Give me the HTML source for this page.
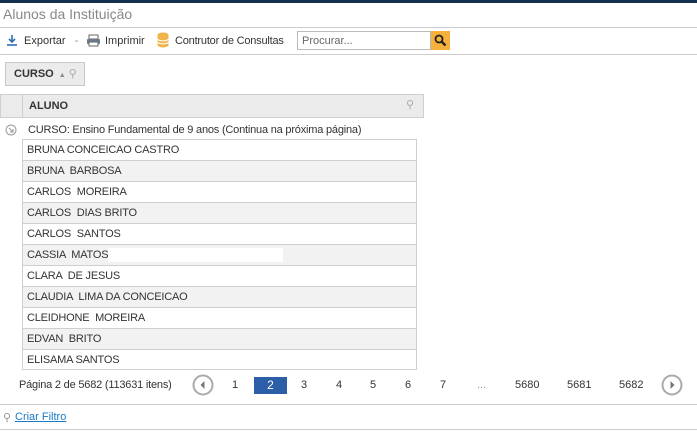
<html><head><style>
body{margin:0;width:697px;height:434px;background:#fff;font-family:"Liberation Sans",sans-serif;font-size:11px;color:#333;position:relative;overflow:hidden}
.a{position:absolute}
.row{position:absolute;left:22px;width:395px;height:21px;border:1px solid #cfcfcf;border-top:0;line-height:20px;padding-left:4px;box-sizing:border-box;letter-spacing:-0.2px}
.g{background:#f2f2f2}
.pg{position:absolute;top:379px;font-size:11px;color:#333}
</style></head><body>
<div class="a" style="left:0;top:0;width:697px;height:3px;background:#13304f"></div>
<div class="a" style="left:3px;top:6px;font-size:14px;color:#888">Alunos da Instituição</div>
<div class="a" style="left:0;top:27px;width:697px;height:1px;background:#ccc"></div>
<svg class="a" style="left:6px;top:34px" width="12" height="12"><path d="M6 1v7M3 5l3 3 3-3" stroke="#2d6db5" stroke-width="1.6" fill="none"/><path d="M1 11h10" stroke="#2d6db5" stroke-width="1.6"/></svg>
<div class="a" style="left:24px;top:35px">Exportar &nbsp; <span style="color:#888">-</span></div>
<svg class="a" style="left:86px;top:34px" width="15" height="13"><rect x="3" y="1" width="9" height="4" fill="#fff" stroke="#666"/><rect x="1" y="5" width="13" height="5" rx="1" fill="#6a7a8c"/><rect x="3" y="8" width="9" height="4" fill="#fff" stroke="#666"/></svg>
<div class="a" style="left:105px;top:35px">Imprimir</div>
<svg class="a" style="left:157px;top:32px" width="12" height="16"><ellipse cx="6" cy="3" rx="5.5" ry="2.5" fill="#f0b44a"/><rect x=".5" y="3" width="11" height="10" fill="#f0b44a"/><ellipse cx="6" cy="13" rx="5.5" ry="2.5" fill="#f0b44a"/><path d="M.5 7.5q5.5 3 11 0M.5 10.5q5.5 3 11 0" stroke="#fff" fill="none"/></svg>
<div class="a" style="left:175px;top:35px;letter-spacing:-0.2px">Contrutor de Consultas</div>
<div class="a" style="left:297px;top:31px;width:134px;height:19px;border:1px solid #bbb;box-sizing:border-box;padding:3px 4px;color:#666">Procurar...</div>
<div class="a" style="left:431px;top:31px;width:19px;height:19px;background:#f6b13d"></div>
<svg class="a" style="left:433px;top:33px" width="15" height="15"><circle cx="6" cy="6" r="3.5" stroke="#222" stroke-width="1.8" fill="none"/><path d="M8.5 8.5l4 4" stroke="#222" stroke-width="2.4"/></svg>
<div class="a" style="left:0;top:54px;width:697px;height:1px;background:#ccc"></div>
<div class="a" style="left:5px;top:62px;width:80px;height:24px;background:#ebebeb;border:1px solid #c8c8c8;box-sizing:border-box;font-weight:bold;line-height:22px;padding-left:8px">CURSO <span style="font-size:7px;color:#888;font-weight:normal">&nbsp;▲</span> <span style="color:#aaa;font-weight:normal">⚲</span></div>
<div class="a" style="left:0;top:94px;width:424px;height:24px;background:#ebebeb;border:1px solid #cfcfcf;box-sizing:border-box"></div>
<div class="a" style="left:22px;top:94px;width:1px;height:24px;background:#cfcfcf"></div>
<div class="a" style="left:29px;top:100px;font-weight:bold">ALUNO</div>
<div class="a" style="left:406px;top:98px;color:#aaa">⚲</div>
<svg class="a" style="left:5px;top:124px" width="12" height="12"><circle cx="6" cy="6" r="5" stroke="#999" fill="none"/><path d="M4 4l4 4M5 8h3V5" stroke="#999" fill="none"/></svg>
<div class="a" style="left:28px;top:124px;letter-spacing:-0.2px">CURSO: Ensino Fundamental de 9 anos (Continua na próxima página)</div>
<div class="a" style="left:22px;top:139px;width:395px;height:1px;background:#cfcfcf"></div>
<div class="row" style="top:140px">BRUNA CONCEICAO CASTRO</div>
<div class="row g" style="top:161px">BRUNA &nbsp;BARBOSA</div>
<div class="row" style="top:182px">CARLOS &nbsp;MOREIRA</div>
<div class="row g" style="top:203px">CARLOS &nbsp;DIAS BRITO</div>
<div class="row" style="top:224px">CARLOS &nbsp;SANTOS</div>
<div class="row g" style="top:245px">CASSIA &nbsp;MATOS<span style="display:inline-block;width:175px;height:14px;background:#fff;vertical-align:middle"></span></div>
<div class="row" style="top:266px">CLARA &nbsp;DE JESUS</div>
<div class="row g" style="top:287px">CLAUDIA &nbsp;LIMA DA CONCEICAO</div>
<div class="row" style="top:308px">CLEIDHONE &nbsp;MOREIRA</div>
<div class="row g" style="top:329px">EDVAN &nbsp;BRITO</div>
<div class="row" style="top:350px;height:20px">ELISAMA SANTOS</div>
<div class="pg" style="left:19px;letter-spacing:-0.2px">Página 2 de 5682 (113631 itens)</div>
<svg class="a" style="left:192px;top:374px" width="22" height="22"><circle cx="11" cy="11" r="9.5" stroke="#aaa" stroke-width="2" fill="none"/><path d="M12.5 7v8l-4-4z" fill="#777"/></svg>
<div class="pg" style="left:232px">1</div>
<div class="a" style="left:254px;top:377px;width:33px;height:17px;background:#2d5ea8;color:#fff;text-align:center;line-height:17px;font-size:12px">2</div>
<div class="pg" style="left:301px">3</div>
<div class="pg" style="left:336px">4</div>
<div class="pg" style="left:370px">5</div>
<div class="pg" style="left:405px">6</div>
<div class="pg" style="left:440px">7</div>
<div class="pg" style="left:477px;color:#999">...</div>
<div class="pg" style="left:515px">5680</div>
<div class="pg" style="left:567px">5681</div>
<div class="pg" style="left:619px">5682</div>
<svg class="a" style="left:661px;top:374px" width="22" height="22"><circle cx="11" cy="11" r="9.5" stroke="#aaa" stroke-width="2" fill="none"/><path d="M9.5 7v8l4-4z" fill="#777"/></svg>
<div class="a" style="left:0;top:404px;width:697px;height:1px;background:#ccc"></div>
<div class="a" style="left:3px;top:411px;color:#999">⚲</div>
<div class="a" style="left:15px;top:411px;color:#1a7bc4;text-decoration:underline">Criar Filtro</div>
<div class="a" style="left:0;top:429px;width:697px;height:1px;background:#ccc"></div>
</body></html>
